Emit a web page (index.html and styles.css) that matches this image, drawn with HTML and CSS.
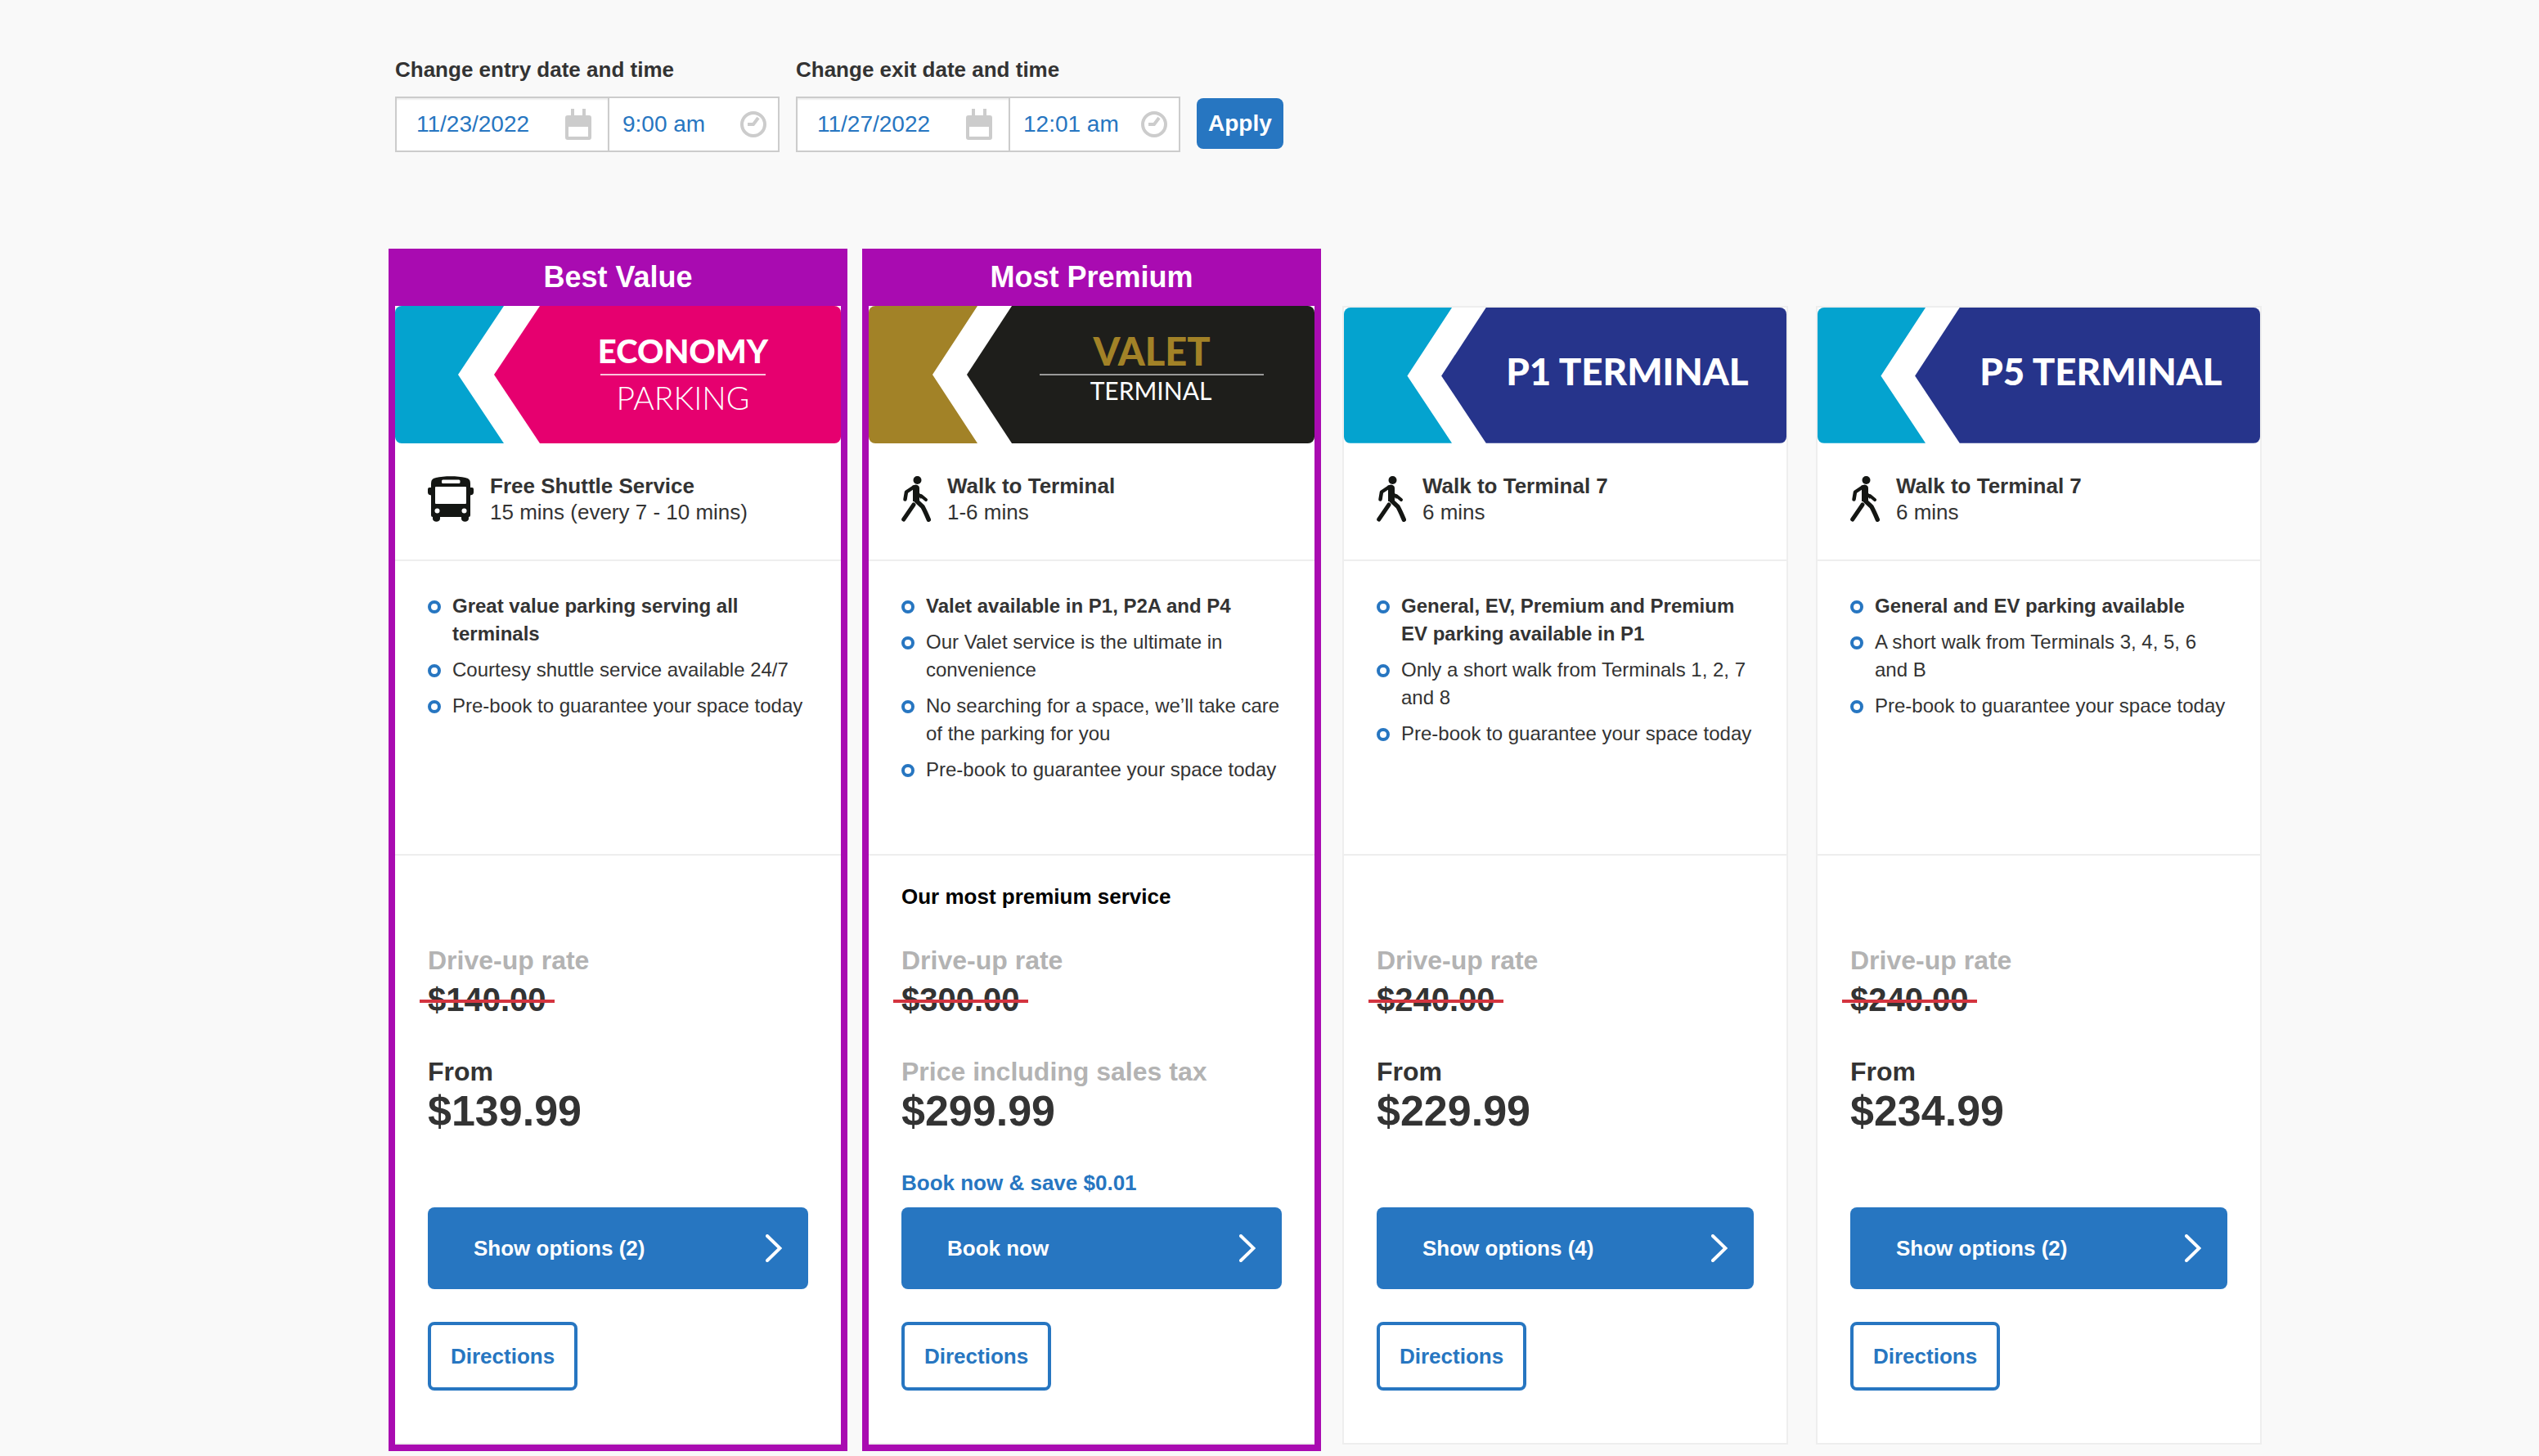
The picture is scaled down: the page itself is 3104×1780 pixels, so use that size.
FILE: index.html
```html
<!DOCTYPE html>
<html lang="en">

<head>
    <meta charset="UTF-8">
    <meta name="viewport" content="width=device-width, initial-scale=1">
    <title>Parking options</title>
    <link rel="stylesheet" href="styles.css">
</head>

<body>
    <!-- shared icons -->
    <svg class="sprite" aria-hidden="true">
        <symbol id="calendar" viewBox="0 0 32 38">
            <path d="M7 0h4v8h10V0h4v8h4a3 3 0 0 1 3 3v24a3 3 0 0 1-3 3H3a3 3 0 0 1-3-3V11a3 3 0 0 1 3-3h4zM4 22v12h24V22z" fill="#ccc" fill-rule="evenodd" />
        </symbol>
        <symbol id="clock" viewBox="0 0 32 32">
            <circle cx="16" cy="16" r="14" fill="none" stroke="#ccc" stroke-width="4" />
            <path d="M9 16h7l6-8" fill="none" stroke="#ccc" stroke-width="4" />
        </symbol>
        <symbol id="bus" viewBox="0 0 56 56">
            <path fill="#141613" fill-rule="evenodd" d="M4 14V10C4 4 6 3 10 2C20-.5 36-.5 46 2C50 3 52 4 52 10V14H54Q56 14 56 16V20Q56 23 52 23.500V48Q52 50 50 50V52C50 57 41 57 41 52V50H15V52C15 57 6 57 6 52V50Q4 50 4 48V23.500Q0 23 0 20V16Q0 14 2 14zM18.500 4.500Q17 4.500 17 6V7.500Q17 9 18.500 9H38Q39.500 9 39.500 7.500V6Q39.500 4.500 38 4.500zM10 13Q9 13 9 14V33Q9 34 10 34H46Q47 34 47 33V14Q47 13 46 13z" />
            <circle cx="11.500" cy="42.500" r="3" fill="#fff" />
            <circle cx="44.500" cy="42.500" r="3" fill="#fff" />
        </symbol>
        <symbol id="walk" viewBox="0 0 36 56">
            <g fill="none" stroke="#141613" stroke-linecap="round" stroke-linejoin="round">
                <path d="M15 13.500L6 19.500L4.500 28.500" stroke-width="4.500" />
                <path d="M24 24L30 29" stroke-width="4" />
                <path d="M18 30L26 37.500Q29 43 33.300 53.200" stroke-width="5.500" />
                <path d="M15 35L2.700 53" stroke-width="5" />
            </g>
            <path d="M13 12Q18 9 21 12Q22 13 22 15V30L14 31V14z" fill="#141613" />
            <path d="M22 21L26 24L24 28L22 26z" fill="#141613" />
            <circle cx="19.500" cy="5" r="5" fill="#141613" />
        </symbol>
        <symbol id="chevron" viewBox="0 0 20 34">
            <path d="M2 2L17.500 17L2 32" fill="none" stroke="#fff" stroke-width="4" stroke-linecap="round" />
        </symbol>
    </svg>

    <form class="search">
        <div class="group">
            <label for="entry-date">Change entry date and time</label>
            <div class="field">
                <div class="part date">
                    <input type="text" id="entry-date" value="11/23/2022">
                    <svg class="calendar"><use href="#calendar" /></svg>
                </div>
                <div class="part time">
                    <input type="text" aria-label="Entry time" value="9:00 am">
                    <svg class="clock"><use href="#clock" /></svg>
                </div>
            </div>
        </div>
        <div class="group">
            <label for="exit-date">Change exit date and time</label>
            <div class="field">
                <div class="part date">
                    <input type="text" id="exit-date" value="11/27/2022">
                    <svg class="calendar"><use href="#calendar" /></svg>
                </div>
                <div class="part time">
                    <input type="text" aria-label="Exit time" value="12:01 am">
                    <svg class="clock"><use href="#clock" /></svg>
                </div>
            </div>
        </div>
        <button type="button" class="apply">Apply</button>
    </form>

    <main class="cards">
        <article class="card featured">
            <h2>Best Value</h2>
            <svg class="banner" viewBox="0 0 545 168">
                <path d="M0 0H133L77 84L133 168H0z" fill="#04a3cf" />
                <path d="M177 0H545V168H177L121 84z" fill="#e6006f" />
                <text class="heavy" x="352" y="70" font-size="40">ECONOMY</text>
                <path d="M251 84H453" stroke="#fbc4dc" stroke-width="2" />
                <text class="light" x="352" y="127" font-size="39">PARKING</text>
            </svg>
            <div class="travel">
                <svg class="bus"><use href="#bus" /></svg>
                <p><strong>Free Shuttle Service</strong><br>15 mins (every 7 - 10 mins)</p>
            </div>
            <ul class="points">
                <li><strong>Great value parking serving all terminals</strong></li>
                <li>Courtesy shuttle service available 24/7</li>
                <li>Pre-book to guarantee your space today</li>
            </ul>
            <div class="pricing">
                <p class="tagline"></p>
                <p class="label muted">Drive-up rate</p>
                <s class="old">$140.00</s>
                <p class="label">From</p>
                <p class="price">$139.99</p>
                <p class="save"></p>
                <button type="button" class="book">Show options (2)<svg class="chevron"><use href="#chevron" /></svg></button>
                <a href="#" class="directions">Directions</a>
            </div>
        </article>

        <article class="card featured">
            <h2>Most Premium</h2>
            <svg class="banner" viewBox="0 0 545 168">
                <path d="M0 0H133L78 84L133 168H0z" fill="#a28227" />
                <path d="M175 0H545V168H175L120 84z" fill="#1e1e1b" />
                <text class="heavy gold" x="346" y="73" font-size="47">VALET</text>
                <path d="M209 84H483" stroke="#999" stroke-width="2" />
                <text class="regular" x="345" y="115" font-size="30">TERMINAL</text>
            </svg>
            <div class="travel">
                <svg class="walk"><use href="#walk" /></svg>
                <p><strong>Walk to Terminal</strong><br>1-6 mins</p>
            </div>
            <ul class="points">
                <li><strong>Valet available in P1, P2A and P4</strong></li>
                <li>Our Valet service is the ultimate in convenience</li>
                <li>No searching for a space, we’ll take care of the parking for you</li>
                <li>Pre-book to guarantee your space today</li>
            </ul>
            <div class="pricing">
                <p class="tagline">Our most premium service</p>
                <p class="label muted">Drive-up rate</p>
                <s class="old">$300.00</s>
                <p class="label muted">Price including sales tax</p>
                <p class="price">$299.99</p>
                <p class="save">Book now &amp; save $0.01</p>
                <button type="button" class="book">Book now<svg class="chevron"><use href="#chevron" /></svg></button>
                <a href="#" class="directions">Directions</a>
            </div>
        </article>

        <article class="card">
            <svg class="banner" viewBox="0 0 545 167">
                <path d="M0 0H133L78 84L133 167H0z" fill="#04a3cf" />
                <path d="M175 0H545V167H175L120 84z" fill="#26348b" />
                <text class="heavy" x="349" y="96" font-size="46">P1 TERMINAL</text>
            </svg>
            <div class="travel">
                <svg class="walk"><use href="#walk" /></svg>
                <p><strong>Walk to Terminal 7</strong><br>6 mins</p>
            </div>
            <ul class="points">
                <li><strong>General, EV, Premium and Premium EV parking available in P1</strong></li>
                <li>Only a short walk from Terminals 1, 2, 7 and 8</li>
                <li>Pre-book to guarantee your space today</li>
            </ul>
            <div class="pricing">
                <p class="tagline"></p>
                <p class="label muted">Drive-up rate</p>
                <s class="old">$240.00</s>
                <p class="label">From</p>
                <p class="price">$229.99</p>
                <p class="save"></p>
                <button type="button" class="book">Show options (4)<svg class="chevron"><use href="#chevron" /></svg></button>
                <a href="#" class="directions">Directions</a>
            </div>
        </article>

        <article class="card">
            <svg class="banner" viewBox="0 0 545 167">
                <path d="M0 0H133L78 84L133 167H0z" fill="#04a3cf" />
                <path d="M175 0H545V167H175L120 84z" fill="#26348b" />
                <text class="heavy" x="349" y="96" font-size="46">P5 TERMINAL</text>
            </svg>
            <div class="travel">
                <svg class="walk"><use href="#walk" /></svg>
                <p><strong>Walk to Terminal 7</strong><br>6 mins</p>
            </div>
            <ul class="points">
                <li><strong>General and EV parking available</strong></li>
                <li>A short walk from Terminals 3, 4, 5, 6 and B</li>
                <li>Pre-book to guarantee your space today</li>
            </ul>
            <div class="pricing">
                <p class="tagline"></p>
                <p class="label muted">Drive-up rate</p>
                <s class="old">$240.00</s>
                <p class="label">From</p>
                <p class="price">$234.99</p>
                <p class="save"></p>
                <button type="button" class="book">Show options (2)<svg class="chevron"><use href="#chevron" /></svg></button>
                <a href="#" class="directions">Directions</a>
            </div>
        </article>
    </main>
</body>

</html>
```
FILE: styles.css
```css
*,
*::before,
*::after {
    box-sizing: border-box;
}

body {
    margin: 0;
    padding: 69px 339px 0 483px;
    background-color: #f9f9f9;
    color: #333;
    font-family: "Liberation Sans", Arial, sans-serif;
    font-size: 26px;
    line-height: 32px;
}

p,
h2,
ul {
    margin: 0;
    padding: 0;
}

svg {
    display: block;
    flex: none;
}

.sprite {
    position: absolute;
    width: 0;
    height: 0;
}

/* search form */
.search {
    display: flex;
    align-items: flex-end;
    gap: 20px;
    margin-bottom: 118px;
}

.group {
    display: flex;
    flex-direction: column;
    gap: 17px;
}

.group label {
    font-weight: bold;
}

.field {
    display: flex;
    height: 68px;
    border: 2px solid #ccc;
    background-color: #fff;
}

.part {
    display: flex;
    align-items: center;
}

.part input {
    flex: 1;
    min-width: 0;
    padding: 0;
    border: 0;
    background: none;
    color: #2776c1;
    font: inherit;
    font-size: 28px;
}

.date {
    width: 260px;
    padding: 0 20px 0 24px;
    border-right: 2px solid #ccc;
    box-shadow: inset 0 2px 2px #eee;
}

.time {
    width: 206px;
    padding: 0 14px 0 16px;
}

.calendar {
    width: 32px;
    height: 38px;
}

.clock {
    width: 32px;
    height: 32px;
}

.apply {
    height: 62px;
    margin-bottom: 4px;
    padding: 0 14px;
    border: 0;
    border-radius: 8px;
    background-color: #2776c1;
    color: #fff;
    font: inherit;
    font-size: 28px;
    font-weight: bold;
}

/* cards */
.cards {
    display: grid;
    grid-template-columns: repeat(4, 1fr);
    gap: 34px;
}

.card {
    margin: 70px 0 8px;
    border: 2px solid #eee;
    border-bottom: 0;
    background-color: #fff;
}

.featured {
    margin: 0 -8px;
    border: 8px solid #a90bb1;
}

.card h2 {
    padding-bottom: 8px;
    background-color: #a90bb1;
    color: #fff;
    font-size: 36px;
    line-height: 54px;
    text-align: center;
}

.banner {
    width: 100%;
    height: auto;
    border-radius: 8px;
}

.banner text {
    fill: #fff;
    font-family: Lato, sans-serif;
    text-anchor: middle;
}

.banner .heavy {
    font-weight: 900;
}

.banner .regular {
    font-weight: 400;
}

.banner .light {
    font-weight: 300;
}

.banner .gold {
    fill: #a28227;
}

.travel {
    display: flex;
    align-items: center;
    gap: 20px;
    padding: 36px 40px 42px;
    border-bottom: 2px solid #eee;
}

.bus {
    width: 56px;
    height: 56px;
}

.walk {
    width: 36px;
    height: 56px;
}

.points {
    min-height: 360px;
    padding: 38px 40px;
    border-bottom: 2px solid #eee;
    list-style: none;
    font-size: 24px;
    line-height: 34px;
}

.points li {
    position: relative;
    margin-bottom: 10px;
    padding-left: 30px;
}

.points li::before {
    content: "";
    position: absolute;
    top: 10px;
    left: 0;
    width: 16px;
    height: 16px;
    border: 4px solid #2776c1;
    border-radius: 50%;
}

.pricing {
    padding: 32px 40px 64px;
    border-bottom: 2px solid #eee;
    font-weight: bold;
}

.tagline {
    min-height: 36px;
    margin-bottom: 40px;
    color: #000;
    line-height: 36px;
}

.label {
    font-size: 32px;
    line-height: 40px;
}

.muted {
    color: #b3b3b3;
}

.old {
    display: block;
    position: relative;
    width: fit-content;
    margin: 4px 0 44px;
    font-size: 40px;
    line-height: 48px;
    text-decoration: none;
}

.old::after {
    content: "";
    position: absolute;
    top: 24px;
    left: -10px;
    right: -10px;
    height: 4px;
    background-color: #d4343f;
}

.price {
    font-size: 52px;
    line-height: 56px;
}

.save {
    min-height: 36px;
    margin: 42px 0 12px;
    color: #2776c1;
    line-height: 36px;
}

.book {
    display: flex;
    align-items: center;
    justify-content: space-between;
    width: 100%;
    height: 100px;
    margin-bottom: 40px;
    padding: 0 32px 0 56px;
    border: 0;
    border-radius: 8px;
    background-color: #2776c1;
    color: #fff;
    font: inherit;
}

.chevron {
    width: 20px;
    height: 34px;
}

.directions {
    display: block;
    width: fit-content;
    padding: 22px 24px;
    border: 4px solid #2776c1;
    border-radius: 8px;
    color: #2776c1;
    text-decoration: none;
}
```
